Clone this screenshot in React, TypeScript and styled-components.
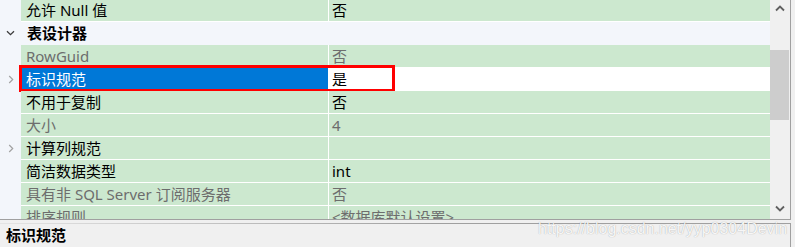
import React from "react";
import styled, { createGlobalStyle } from "styled-components";

const GlobalStyle = createGlobalStyle`
	html, body {
		margin: 0;
		padding: 0;
		background: #f0f0f0;
		overflow: hidden;
	}
	body {
		font-family: "Noto Sans", "Noto Sans CJK SC", sans-serif;
		font-size: 15px;
	}
`;

const StyledWindow = styled.div`
	position: relative;
	width: 795px;
	height: 247px;
	overflow: hidden;
`;

const StyledGridFrame = styled.div`
	display: flex;
	width: 790px;
	height: 219px;
	border-right: 1px solid #a0a0a0;
	border-bottom: 1px solid #a0a0a0;
	background: #f3f6fb;
`;

const StyledViewport = styled.div`
	width: 770px;
	overflow: hidden;
`;

const StyledRowList = styled.div`
	margin-top: -1px;
`;

const StyledRow = styled.div`
	position: relative;
	display: flex;
	height: 23px;
`;

const StyledGutter = styled.div`
	flex: none;
	width: 21px;
	display: flex;
	align-items: center;
	justify-content: center;
	padding-bottom: 1px;
	box-sizing: border-box;
`;

const StyledCategoryLabel = styled.div`
	flex: 1;
	padding-left: 6px;
	line-height: 22px;
	font-weight: bold;
	color: #000;
`;

const StyledNameCell = styled.div<{ $selected?: boolean; $disabled?: boolean }>`
	flex: none;
	width: 308px;
	box-sizing: border-box;
	padding-left: 5px;
	line-height: 22px;
	white-space: nowrap;
	border-right: 1px solid #ffffff;
	border-bottom: 1px solid #ffffff;
	background: ${(p) => (p.$selected ? "#0078d7" : "#cce8cf")};
	color: ${(p) => (p.$selected ? "#ffffff" : p.$disabled ? "#6d6d6d" : "#000000")};
`;

const StyledValueCell = styled.div<{ $selected?: boolean; $disabled?: boolean }>`
	flex: 1;
	padding-left: 3px;
	line-height: 22px;
	white-space: nowrap;
	border-bottom: 1px solid #ffffff;
	background: ${(p) => (p.$selected ? "#ffffff" : "#cce8cf")};
	color: ${(p) => (p.$disabled ? "#6d6d6d" : "#000000")};
`;

const StyledHighlight = styled.div`
	position: absolute;
	left: 19px;
	top: -3px;
	width: 376px;
	height: 27px;
	box-sizing: border-box;
	border: 3px solid #ff0000;
	pointer-events: none;
`;

const StyledScrollBar = styled.div`
	flex: none;
	width: 20px;
	display: flex;
	flex-direction: column;
	background: #f0f0f0;
	padding-bottom: 2px;
	box-sizing: border-box;
`;

const StyledScrollButton = styled.div`
	height: 17px;
	display: flex;
	align-items: center;
	justify-content: center;
`;

const StyledTrack = styled.div`
	flex: 1;
`;

const StyledThumb = styled.div`
	margin-top: 33px;
	width: 19px;
	height: 70px;
	background: #cdcdcd;
`;

const StyledDescription = styled.div`
	margin-top: 3px;
	width: 790px;
	height: 23px;
	border-top: 1px solid;
	border-right: 1px solid;
	border-left: 0;
	border-bottom: 0;
	border-image: linear-gradient(to right, #e4e4e4, #a0a0a0 55%) 1;
`;

const StyledDescriptionTitle = styled.div`
	padding-left: 6px;
	line-height: 23px;
	font-weight: bold;
	color: #000;
`;

const StyledWatermark = styled.div`
	position: absolute;
	left: 538px;
	top: 221px;
	font-family: "Liberation Sans", Arial, sans-serif;
	font-size: 16px;
	line-height: 16px;
	color: rgba(255, 255, 255, 0.92);
	text-shadow: 0 0 1px rgba(0, 0, 0, 0.35);
	white-space: nowrap;
	pointer-events: none;
`;

type Property = {
	name: string;
	value: string;
	disabled?: boolean;
	expandable?: boolean;
	selected?: boolean;
};

type Entry = { category: string } | Property;

const entries: Entry[] = [
	{ name: "允许 Null 值", value: "否" },
	{ category: "表设计器" },
	{ name: "RowGuid", value: "否", disabled: true },
	{ name: "标识规范", value: "是", expandable: true, selected: true },
	{ name: "不用于复制", value: "否" },
	{ name: "大小", value: "4", disabled: true },
	{ name: "计算列规范", value: "", expandable: true },
	{ name: "简洁数据类型", value: "int" },
	{ name: "具有非 SQL Server 订阅服务器", value: "否", disabled: true },
	{ name: "排序规则", value: "<数据库默认设置>", disabled: true },
];

const ExpandedIcon = () => (
	<svg width="9" height="6" viewBox="0 0 9 6">
		<path d="M1 1.2 L4.5 4.7 L8 1.2" fill="none" stroke="#3c3c3c" strokeWidth="1.3" />
	</svg>
);

const CollapsedIcon = () => (
	<svg width="6" height="9" viewBox="0 0 6 9">
		<path d="M1.2 1 L4.7 4.5 L1.2 8" fill="none" stroke="#a2a2a2" strokeWidth="1.2" />
	</svg>
);

const ScrollArrow = ({ down }: { down?: boolean }) => (
	<svg width="10" height="7" viewBox="0 0 10 7">
		<path
			d={down ? "M1 1.5 L5 5.5 L9 1.5" : "M1 5.5 L5 1.5 L9 5.5"}
			fill="none"
			stroke="#606060"
			strokeWidth="1.8"
		/>
	</svg>
);

const App = () => {
	return (
		<>
			<GlobalStyle />
			<StyledWindow>
				<StyledGridFrame>
					<StyledViewport>
						<StyledRowList>
							{entries.map((entry, i) =>
								"category" in entry ? (
									<StyledRow key={i}>
										<StyledGutter>
											<ExpandedIcon />
										</StyledGutter>
										<StyledCategoryLabel>{entry.category}</StyledCategoryLabel>
									</StyledRow>
								) : (
									<StyledRow key={i}>
										<StyledGutter>{entry.expandable && <CollapsedIcon />}</StyledGutter>
										<StyledNameCell $selected={entry.selected} $disabled={entry.disabled}>
											{entry.name}
										</StyledNameCell>
										<StyledValueCell $selected={entry.selected} $disabled={entry.disabled}>
											{entry.value}
										</StyledValueCell>
										{entry.selected && <StyledHighlight />}
									</StyledRow>
								)
							)}
						</StyledRowList>
					</StyledViewport>

					<StyledScrollBar>
						<StyledScrollButton>
							<ScrollArrow />
						</StyledScrollButton>
						<StyledTrack>
							<StyledThumb />
						</StyledTrack>
						<StyledScrollButton>
							<ScrollArrow down />
						</StyledScrollButton>
					</StyledScrollBar>
				</StyledGridFrame>

				<StyledDescription>
					<StyledDescriptionTitle>标识规范</StyledDescriptionTitle>
				</StyledDescription>

				<StyledWatermark>https://blog.csdn.net/yyp0304Devin</StyledWatermark>
			</StyledWindow>
		</>
	);
};

export default App;
